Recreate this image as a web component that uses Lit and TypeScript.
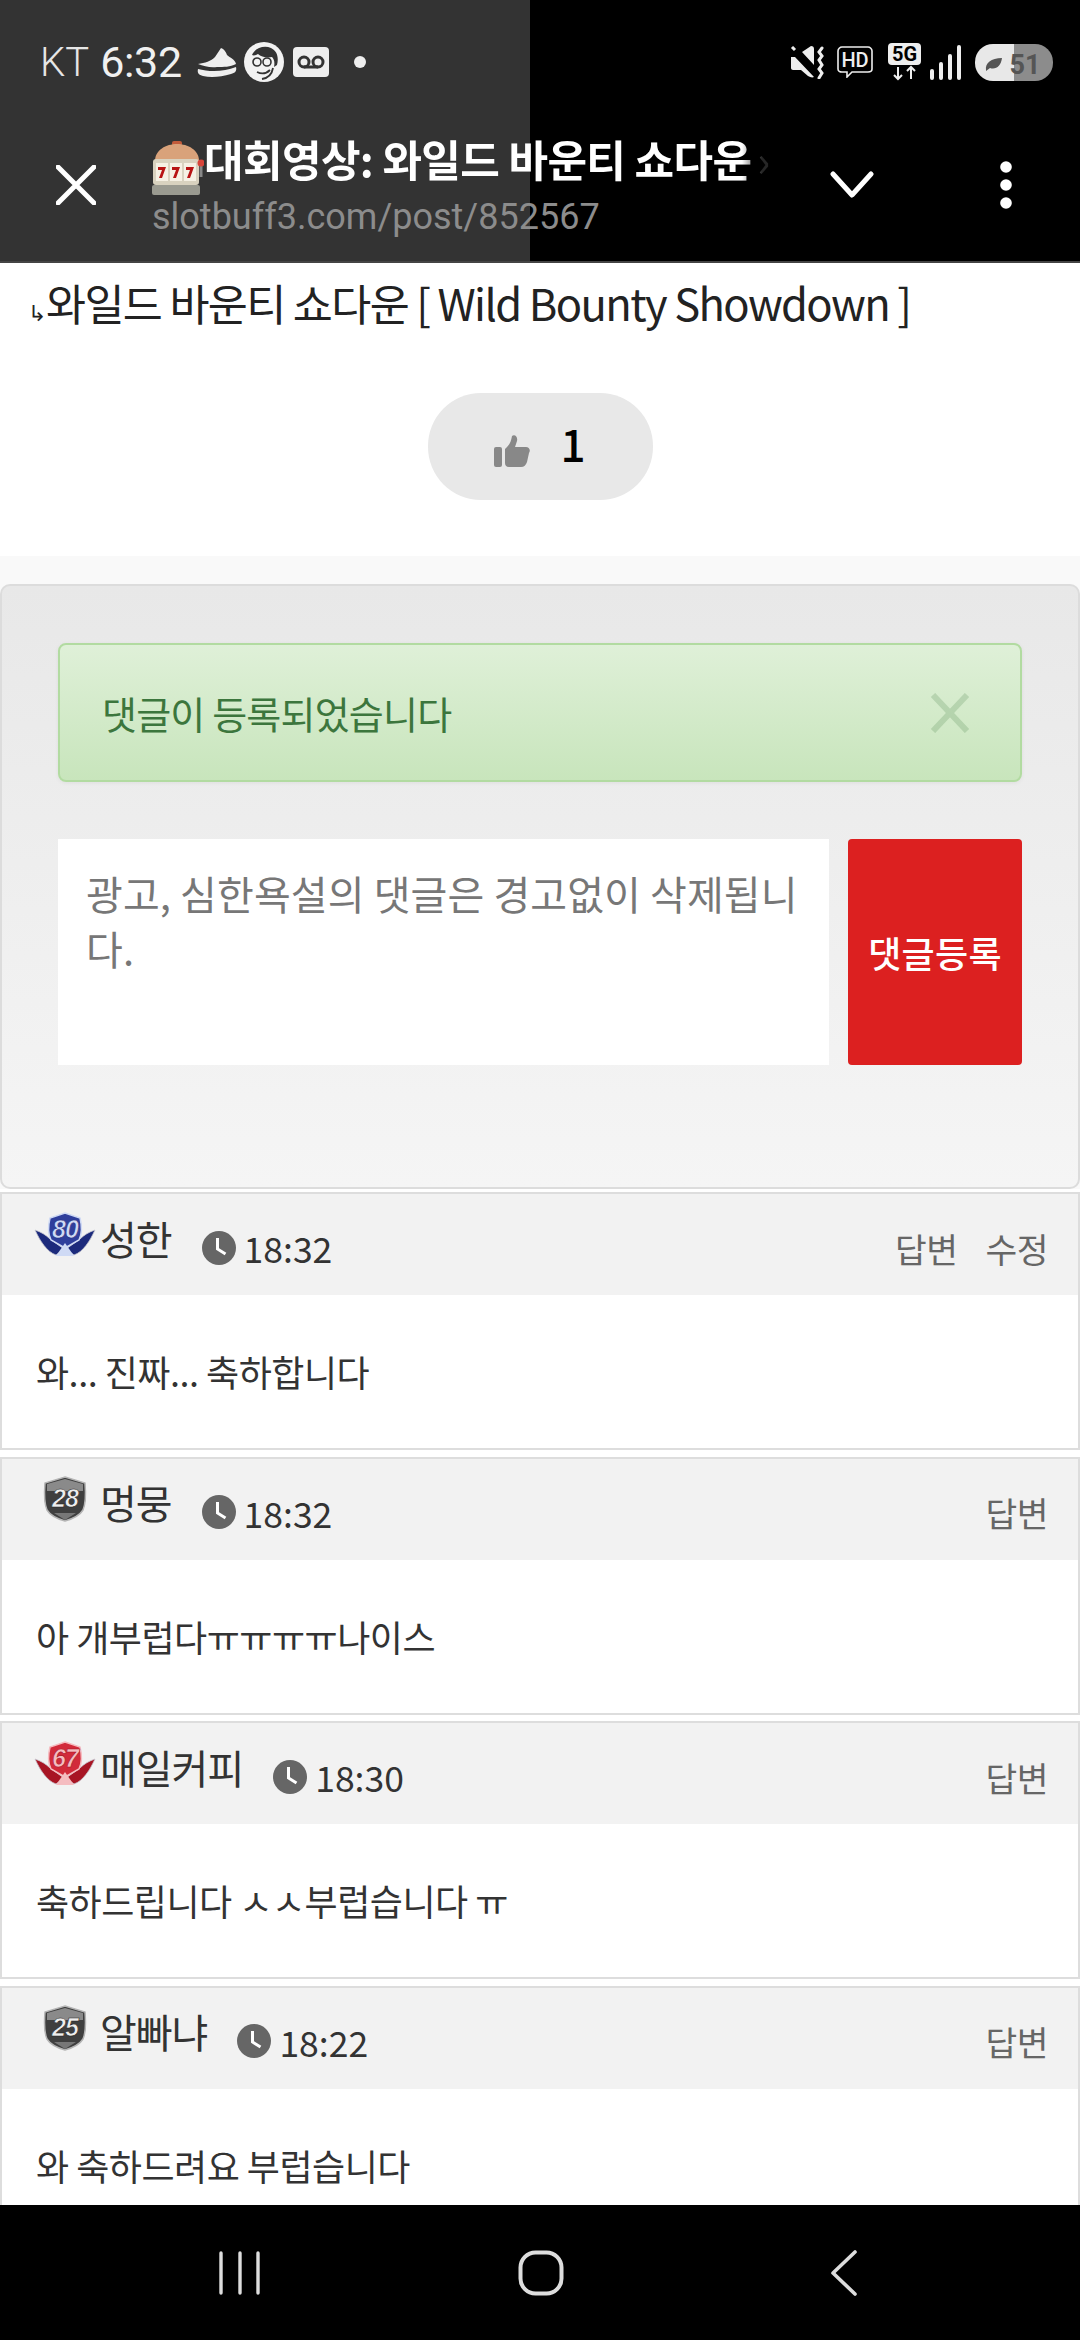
import { LitElement, html, css, svg } from "lit";
import { customElement } from "lit/decorators.js";

type Comment = {
  level: number;
  kind: "blue" | "red" | "gray";
  name: string;
  time: string;
  text: string;
  edit?: boolean;
};

const COMMENTS: Comment[] = [
  { level: 80, kind: "blue", name: "성한", time: "18:32", text: "와... 진짜... 축하합니다", edit: true },
  { level: 28, kind: "gray", name: "멍뭉", time: "18:32", text: "아 개부럽다ㅠㅠㅠㅠ나이스" },
  { level: 67, kind: "red", name: "매일커피", time: "18:30", text: "축하드립니다 ㅅㅅ부럽습니다 ㅠ" },
  { level: 25, kind: "gray", name: "알빠냐", time: "18:22", text: "와 축하드려요 부럽습니다" },
];

// level badge: winged emblem for blue and red, plain shield for gray
function badge(level: number, kind: Comment["kind"]) {
  if (kind === "gray") {
    return svg`<svg class="badge" viewBox="0 0 62 46">
      <path d="M31 1l20 6c1 12 1 20-2 27-3 5-11 9-18 11-7-2-15-6-18-11-3-7-3-15-2-27z" fill="#3f3f3f" stroke="#b5b5b5" stroke-width="1.5"/>
      <path d="M13 8l18-5 18 5v7H13z" fill="#8a8a8a"/>
      <path d="M20 37h22l-11 7z" fill="#777"/>
      <text x="31" y="31" text-anchor="middle" class="badge-num gray">${level}</text>
    </svg>`;
  }
  const dark = kind === "blue" ? "#1c2a7c" : "#a81524";
  const mid = kind === "blue" ? "#2f3f9c" : "#d22a3a";
  const light = kind === "blue" ? "#cfdaf5" : "#f5bcc0";
  return svg`<svg class="badge" viewBox="0 0 62 46">
    <path d="M1 18c6 2 11 5 15 9l14 10-8 6C13 40 6 29 1 18z" fill=${dark} stroke="#c8c8d0" stroke-width="0.8"/>
    <path d="M61 18c-6 2-11 5-15 9L32 37l8 6c9-3 16-14 21-25z" fill=${dark} stroke="#c8c8d0" stroke-width="0.8"/>
    <path d="M31 1l15 5c2 8 2 16-1 22l-14 8-14-8c-3-6-3-14-1-22z" fill=${mid} stroke=${light} stroke-width="1.5"/>
    <path d="M31 31l9 13H22z" fill=${light}/>
    <text x="31" y="26" text-anchor="middle" class="badge-num" fill=${light} stroke=${dark} stroke-width="0.6">${level}</text>
  </svg>`;
}

const clock = svg`<svg class="clock" viewBox="0 0 34 34">
  <circle cx="17" cy="17" r="17" fill="#666"/>
  <path d="M15.5 7v11l8 5" fill="none" stroke="#fff" stroke-width="3"/>
</svg>`;

@customElement("app-root")
export class AppRoot extends LitElement {
  static styles = css`
    :host {
      display: flex;
      flex-direction: column;
      width: 1080px;
      height: 2340px;
      overflow: hidden;
      background: #fff;
      font-family: "Noto Sans CJK KR", "Noto Sans", sans-serif;
      color: #333;
    }

    svg {
      display: block;
      flex: none;
    }

    .top {
      height: 263px;
      flex: none;
      box-sizing: border-box;
      border-bottom: 2px solid #444;
      background: linear-gradient(90deg, #333 530px, #000 530px);
      color: #fff;
    }

    .status {
      height: 124px;
      box-sizing: border-box;
      display: flex;
      align-items: center;
      justify-content: space-between;
      padding: 0 27px 0 40px;
      font-family: Roboto, sans-serif;
    }

    .status-left,
    .status-right {
      display: flex;
      align-items: center;
    }

    .carrier {
      font-size: 40px;
      color: #e6e6e6;
      margin-right: 11px;
      font-weight: 300;
    }

    .clocktime {
      font-size: 43px;
      color: #f0f0f0;
      margin-right: 15px;
      letter-spacing: -0.3px;
    }

    .browser {
      height: 137px;
      display: grid;
      grid-template-columns: 152px 620px 160px 148px;
      align-items: start;
    }

    .icon-cell {
      display: flex;
      justify-content: center;
      align-items: center;
      height: 122px;
    }

    .titles {
      display: flex;
      flex-direction: column;
      min-width: 0;
      padding-top: 8px;
    }

    .page-title {
      display: flex;
      align-items: flex-start;
      height: 64px;
      white-space: nowrap;
      font-size: 43px;
      line-height: 52px;
      font-weight: 700;
      letter-spacing: -0.6px;
      -webkit-mask-image: linear-gradient(90deg, #000 590px, rgba(0, 0, 0, 0.15) 610px);
      mask-image: linear-gradient(90deg, #000 590px, rgba(0, 0, 0, 0.15) 610px);
    }

    .page-title svg {
      margin-top: 9px;
    }

    .page-title .more {
      margin-left: 6px;
      font-weight: 400;
    }

    .url {
      font-family: Roboto, sans-serif;
      font-size: 36px;
      line-height: 42px;
      color: #8c8c8c;
      white-space: nowrap;
    }

    .page {
      flex: 1;
      min-height: 0;
      overflow: hidden;
    }

    .post-title {
      margin: 0;
      height: 60px;
      padding: 10px 0 0 28px;
      font-size: 43.5px;
      line-height: 60px;
      font-weight: 400;
      letter-spacing: -1.6px;
      color: #222;
      white-space: nowrap;
    }

    .post-title .arrow {
      font-size: 22px;
      letter-spacing: 0;
    }

    .like-row {
      display: flex;
      justify-content: center;
      padding-top: 60px;
      height: 107px;
      padding-bottom: 56px;
    }

    .like {
      width: 225px;
      height: 107px;
      border-radius: 53px;
      background: #e8e8e8;
      display: flex;
      align-items: center;
      justify-content: center;
      gap: 30px;
      color: #000;
      font-size: 44px;
      font-weight: 500;
    }

    .like svg {
      margin-top: 8px;
    }

    .like span {
      margin-top: -8px;
    }

    .reply-wrap {
      background: #f9f9f9;
      padding-top: 28px;
    }

    .panel {
      box-sizing: border-box;
      height: 605px;
      padding: 57px 56px 0;
      border: 2px solid #dcdcdc;
      border-radius: 10px;
      background: linear-gradient(#e8e8e8, #f5f5f5);
    }

    .alert {
      box-sizing: border-box;
      height: 139px;
      display: flex;
      align-items: center;
      justify-content: space-between;
      padding: 0 50px 0 42px;
      border: 2px solid #b2dba1;
      border-radius: 8px;
      background: linear-gradient(#dff0d8, #c8e5bc);
      box-shadow: 0 1px 4px rgba(0, 0, 0, 0.06);
      color: #3c763d;
      font-size: 38px;
      letter-spacing: -0.8px;
    }

    .form {
      display: flex;
      gap: 19px;
      margin-top: 57px;
      height: 226px;
    }

    .input {
      flex: 1;
      box-sizing: border-box;
      padding: 27px 28px 0;
      background: #fff;
      color: #777;
      font-size: 40px;
      line-height: 55px;
      word-break: break-all;
      letter-spacing: 0.1px;
    }

    .submit {
      width: 174px;
      border-radius: 4px;
      background: #dc2020;
      color: #fff;
      font-size: 36px;
      font-weight: 500;
      letter-spacing: 0.3px;
      display: flex;
      align-items: center;
      justify-content: center;
      white-space: nowrap;
    }

    .comments {
      display: flex;
      flex-direction: column;
      gap: 6.5px;
      padding-top: 3px;
    }

    .comment {
      box-sizing: border-box;
      height: 258px;
      flex: none;
      border: 2px solid #ddd;
      background: #fff;
    }

    .comment-head {
      height: 101px;
      background: #f2f2f2;
      display: flex;
      align-items: center;
      padding: 0 30px 0 32px;
    }

    .badge {
      width: 62px;
      height: 46px;
      margin: -20px 4px 0 0;
    }

    .badge-num {
      font-family: "Liberation Sans", sans-serif;
      font-size: 25px;
      font-weight: 700;
      font-style: italic;
      letter-spacing: -1px;
    }

    .badge-num.gray {
      fill: #eee;
      stroke: #222;
      stroke-width: 0.6px;
    }

    .name {
      font-size: 40px;
      line-height: 50px;
      margin-top: -14px;
      color: #333;
      letter-spacing: -1px;
    }

    .clock {
      width: 34px;
      height: 34px;
      margin: 6px 8px 0 30px;
    }

    .time {
      font-size: 35.5px;
      margin-top: 6px;
      color: #333;
    }

    .actions {
      margin-left: auto;
      margin-top: 6px;
      display: flex;
      gap: 28px;
      color: #666;
      font-size: 34.5px;
      letter-spacing: -0.5px;
    }

    .comment-body {
      padding: 51px 0 0 34px;
      font-size: 36px;
      line-height: 50px;
      color: #333;
      letter-spacing: -0.5px;
      white-space: nowrap;
    }

    .nav {
      height: 135px;
      flex: none;
      background: #000;
      display: flex;
      align-items: center;
      padding-left: 219px;
    }

    .nav .home {
      margin-left: 257px;
    }

    .nav .back {
      margin-left: 267px;
    }
  `;

  private renderStatus() {
    return html`
      <div class="status">
        <div class="status-left">
          <span class="carrier">KT</span>
          <span class="clocktime">6:32</span>
          <svg width="40" height="32" viewBox="0 0 40 32" style="margin-right:7px">
            <path d="M1 18c7-1 13-3 17-7l6-9c3 1 5 4 6 7 3 3 8 4 9 9-6 3-12 3-19 3-7 1-13-1-19-3z" fill="#eee"/>
            <path d="M1 23c11 3 26 3 38-2 1 4-1 6-5 7-10 3-20 4-28 2-4-1-6-3-5-7z" fill="#eee"/>
          </svg>
          <svg width="40" height="40" viewBox="0 0 40 40" style="margin-right:9px">
            <circle cx="20" cy="20" r="20" fill="#f2f2f2"/>
            <path d="M8 13c3-7 12-10 19-7 6 3 8 9 6 17l-3 2c1-5 0-8-2-10-5 1-11 0-14-3-2 1-4 2-6 1z" fill="#333"/>
            <circle cx="13" cy="20" r="4" fill="none" stroke="#333" stroke-width="1.6"/>
            <circle cx="23" cy="20" r="4" fill="none" stroke="#333" stroke-width="1.6"/>
            <path d="M13 30c4 2 9 2 13-2M29 26c-1 6-5 10-11 11" fill="none" stroke="#333" stroke-width="1.8"/>
          </svg>
          <svg width="36" height="30" viewBox="0 0 36 30" style="margin-right:25px">
            <rect width="36" height="30" rx="4" fill="#eee"/>
            <circle cx="11" cy="15" r="5" fill="none" stroke="#333" stroke-width="3"/>
            <circle cx="25" cy="15" r="5" fill="none" stroke="#333" stroke-width="3"/>
            <path d="M11 20h14" stroke="#333" stroke-width="3"/>
          </svg>
          <svg width="12" height="12" viewBox="0 0 12 12"><circle cx="6" cy="6" r="6" fill="#eee"/></svg>
        </div>
        <div class="status-right">
          <svg width="35" height="33" viewBox="0 0 35 33" style="margin-right:12px">
            <path d="M1 11h4L24 31c-2 1-4 0-6-1l-7-6H3c-1 0-2-1-2-2zM12 6l9-6c2 0 3 1 3 3v16z" fill="#eee"/>
            <path d="M2 1l3 3" stroke="#eee" stroke-width="3"/>
            <path d="M32 2l-3 4 3 4-3 4 3 5-3 4 3 4-3 5" fill="none" stroke="#eee" stroke-width="3" stroke-linecap="round"/>
          </svg>
          <svg width="36" height="32" viewBox="0 0 36 32" style="margin-right:15px">
            <path d="M5 1h26c2 0 4 2 4 4v18c0 2-2 3-4 3H15l-5 5v-5H5c-2 0-4-1-4-3V5c0-2 2-4 4-4z" fill="none" stroke="#eee" stroke-width="1.6"/>
            <text x="18" y="21" text-anchor="middle" font-size="20" font-weight="500" font-family="Roboto, sans-serif" fill="#eee">HD</text>
          </svg>
          <svg width="34" height="38" viewBox="0 0 34 38" style="margin-right:8px">
            <rect width="33" height="22" rx="4" fill="#eee"/>
            <text x="16.5" y="18" text-anchor="middle" font-size="20" font-weight="700" font-family="Roboto, sans-serif" fill="#000">5G</text>
            <path d="M10 24v12M6 32l4 4 4-4M23 36V24M19 28l4-4 4 4" fill="none" stroke="#eee" stroke-width="2"/>
          </svg>
          <svg width="32" height="35" viewBox="0 0 32 35" style="margin-right:13px">
            <rect x="0" y="24" width="4" height="11" rx="2" fill="#eee"/>
            <rect x="9" y="17" width="4" height="18" rx="2" fill="#eee"/>
            <rect x="18" y="9" width="4" height="26" rx="2" fill="#eee"/>
            <rect x="27" y="0" width="4" height="35" rx="2" fill="#eee"/>
          </svg>
          <svg width="78" height="37" viewBox="0 0 78 37">
            <defs><clipPath id="battery"><rect width="78" height="37" rx="18"/></clipPath></defs>
            <g clip-path="url(#battery)">
              <rect width="39" height="37" fill="#e8e8e8"/>
              <rect x="39" width="39" height="37" fill="#8c8c8c"/>
            </g>
            <path d="M11 26c-1-7 5-12 16-12-1 8-6 12-12 10l-4 3z" fill="#555"/>
            <text x="50" y="30" text-anchor="middle" font-size="27" font-weight="700" font-family="Roboto, sans-serif" fill="#555">51</text>
          </svg>
        </div>
      </div>
    `;
  }

  private renderBrowser() {
    return html`
      <div class="browser">
        <div class="icon-cell">
          <svg width="40" height="40" viewBox="0 0 40 40">
            <path d="M2 2l36 36M38 2L2 38" stroke="#fff" stroke-width="5" stroke-linecap="round"/>
          </svg>
        </div>
        <div class="titles">
          <div class="page-title">
            <svg width="52" height="54" viewBox="0 0 52 54">
              <rect x="20" y="0" width="10" height="5" rx="2" fill="#c25b3a"/>
              <path d="M3 20C3 9 14 3 25 3s22 6 22 17z" fill="#d9a27a"/>
              <rect x="1" y="18" width="46" height="26" rx="3" fill="#d9d2bf"/>
              <rect x="4" y="22" width="12" height="18" fill="#f6f1e4"/>
              <rect x="18" y="22" width="12" height="18" fill="#f6f1e4"/>
              <rect x="32" y="22" width="12" height="18" fill="#f6f1e4"/>
              <path d="M6 26h8l-4 11H7l3-8H6zM20 26h8l-4 11h-3l3-8h-4zM34 26h8l-4 11h-3l3-8h-4z" fill="#b81414"/>
              <rect x="0" y="44" width="48" height="10" rx="2" fill="#9a9a90"/>
              <path d="M49 22v14" stroke="#888" stroke-width="3"/>
              <circle cx="49" cy="22" r="3.5" fill="#d8453a"/>
            </svg>
            <span class="label">대회영상: 와일드 바운티 쇼다운</span>
            <span class="more">›</span>
          </div>
          <div class="url">slotbuff3.com/post/852567</div>
        </div>
        <div class="icon-cell">
          <svg width="44" height="28" viewBox="0 0 44 28">
            <path d="M3 3l19 21L41 3" fill="none" stroke="#fff" stroke-width="5" stroke-linecap="round" stroke-linejoin="round"/>
          </svg>
        </div>
        <div class="icon-cell">
          <svg width="12" height="48" viewBox="0 0 12 48">
            <circle cx="6" cy="6" r="5.8" fill="#fff"/>
            <circle cx="6" cy="24" r="5.8" fill="#fff"/>
            <circle cx="6" cy="42" r="5.8" fill="#fff"/>
          </svg>
        </div>
      </div>
    `;
  }

  private renderComment(c: Comment) {
    return html`
      <div class="comment">
        <div class="comment-head">
          ${badge(c.level, c.kind)}
          <span class="name">${c.name}</span>
          ${clock}
          <span class="time">${c.time}</span>
          <div class="actions">
            <span>답변</span>
            ${c.edit ? html`<span>수정</span>` : ""}
          </div>
        </div>
        <div class="comment-body">${c.text}</div>
      </div>
    `;
  }

  render() {
    return html`
      <div class="top">${this.renderStatus()} ${this.renderBrowser()}</div>
      <div class="page">
        <h1 class="post-title"><span class="arrow">↳</span>와일드 바운티 쇼다운 [ Wild Bounty Showdown ]</h1>
        <div class="like-row">
          <div class="like">
            <svg width="36" height="32" viewBox="0 0 36 32">
              <rect x="0" y="12" width="8" height="20" rx="2" fill="#888"/>
              <path d="M11 14c4-3 6-7 7-13 3-2 6 1 5 5l-2 6h11c3 0 5 3 3 6l-2 9c-1 3-3 5-6 5H15c-3 0-4-2-4-4z" fill="#888"/>
            </svg>
            <span>1</span>
          </div>
        </div>
        <div class="reply-wrap">
          <div class="panel">
            <div class="alert">
              <span>댓글이 등록되었습니다</span>
              <svg width="40" height="40" viewBox="0 0 40 40">
                <path d="M3 2l34 36M37 2L3 38" stroke="#3c763d" stroke-opacity="0.2" stroke-width="6"/>
              </svg>
            </div>
            <div class="form">
              <div class="input">광고, 심한욕설의 댓글은 경고없이 삭제됩니다.</div>
              <div class="submit">댓글등록</div>
            </div>
          </div>
        </div>
        <div class="comments">${COMMENTS.map((c) => this.renderComment(c))}</div>
      </div>
      <div class="nav">
        <svg width="42" height="44" viewBox="0 0 42 44">
          <path d="M2 2v40M21 2v40M39 2v40" stroke="#ddd" stroke-width="3.4" stroke-linecap="round"/>
        </svg>
        <svg class="home" width="46" height="46" viewBox="0 0 46 46">
          <rect x="2.5" y="2.5" width="41" height="41" rx="15" fill="none" stroke="#ddd" stroke-width="4"/>
        </svg>
        <svg class="back" width="26" height="46" viewBox="0 0 26 46">
          <path d="M24 2L2 23l22 21" fill="none" stroke="#ddd" stroke-width="3.6" stroke-linecap="round" stroke-linejoin="round"/>
        </svg>
      </div>
    `;
  }
}

declare global {
  interface HTMLElementTagNameMap {
    "app-root": AppRoot;
  }
}
